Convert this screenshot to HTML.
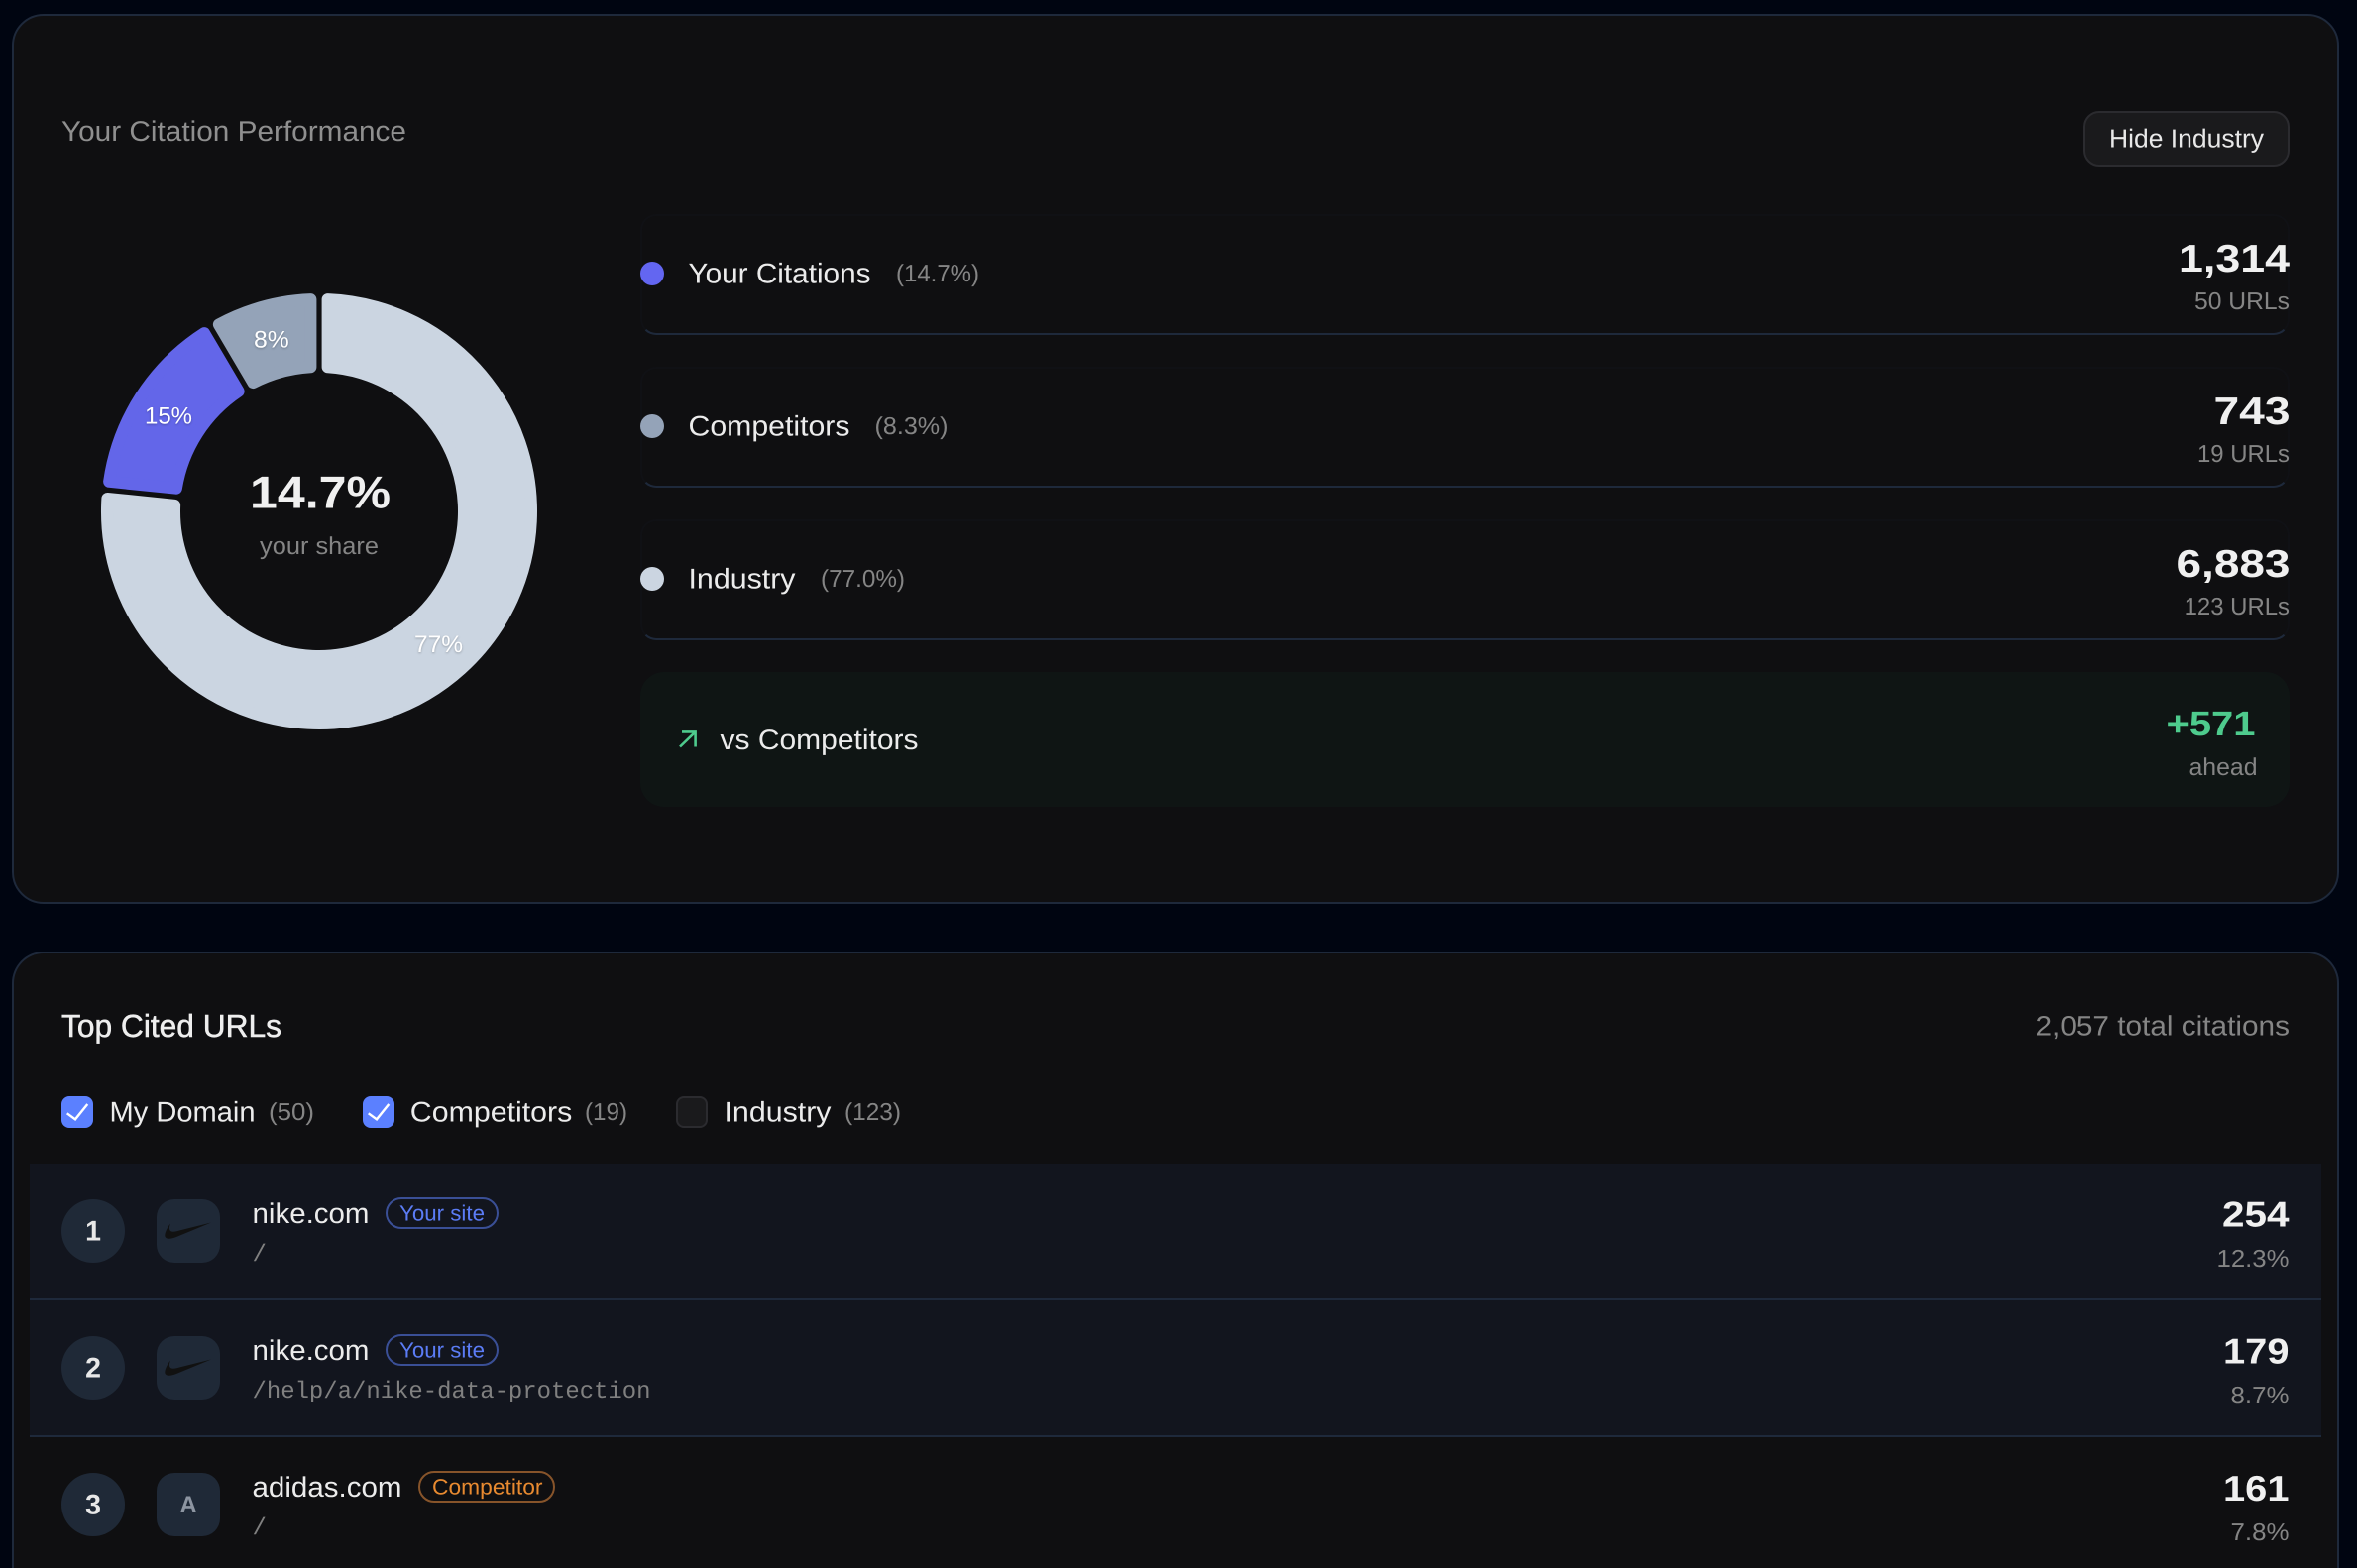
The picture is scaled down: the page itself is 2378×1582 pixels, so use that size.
<!DOCTYPE html>
<html lang="en">
<head>
<meta charset="utf-8">
<title>Citation Performance</title>
<style>
html,body{margin:0;padding:0;background:#000511;width:2378px;height:1582px;overflow:hidden}
#page{position:relative;width:2378px;height:1582px;overflow:hidden;background:#000511;font-family:"Liberation Sans",sans-serif}
.abs{position:absolute;box-sizing:border-box}
.card{background:#0f0f11;border:2px solid #1e293b;border-radius:32px}
.leg{left:646px;width:1664px;height:122px;border:2px solid #101115;border-bottom-color:#1e293b;border-radius:16px}
.fav{left:158px;width:64px;height:64px;border-radius:18px;background:#1f2937}
.rank{left:62px;width:64px;height:64px;border-radius:50%;background:#1f2937}
.badge{height:32px;border-radius:16px;border:2px solid #3a4f96}
svg{position:absolute;left:0;top:0}
svg text{font-family:"Liberation Sans",sans-serif;text-rendering:geometricPrecision}
svg .mono{font-family:"Liberation Mono",monospace}
.t{font-size:28.5px;fill:#ececec}
.s{font-size:24.5px;fill:#858585}
.b{font-weight:700;fill:#f0f0f0}
.pct{font-size:24px;fill:#fff}
</style>
</head>
<body>
<div id="page">
<div class="abs card" style="left:12px;top:14px;width:2348px;height:898px"></div>
<div class="abs" style="left:2102px;top:112px;width:208px;height:56px;background:#1a1a1c;border:2px solid #2b2b2f;border-radius:16px"></div>
<div class="abs leg" style="top:216px"></div>
<div class="abs leg" style="top:370px"></div>
<div class="abs leg" style="top:524px"></div>
<div class="abs" style="left:646px;top:678px;width:1664px;height:136px;background:#0f1514;border-radius:24px"></div>

<div class="abs card" style="left:12px;top:960px;width:2348px;height:622px;border-bottom:0;border-radius:32px 32px 0 0"></div>
<div class="abs" style="left:682px;top:1106px;width:32px;height:32px;background:#1a1a1c;border:2px solid #2b2b2f;border-radius:8px"></div>
<div class="abs" style="left:62px;top:1106px;width:32px;height:32px;background:#5b80ff;border-radius:8px"></div>
<div class="abs" style="left:366px;top:1106px;width:32px;height:32px;background:#5b80ff;border-radius:8px"></div>

<div class="abs" style="left:30px;top:1174px;width:2312px;height:138px;background:#12151e;border-bottom:2px solid #1e293b"></div>
<div class="abs" style="left:30px;top:1312px;width:2312px;height:138px;background:#12151e;border-bottom:2px solid #1e293b"></div>

<div class="abs rank" style="top:1210px"></div>
<div class="abs rank" style="top:1348px"></div>
<div class="abs rank" style="top:1486px"></div>
<div class="abs fav" style="top:1210px"></div>
<div class="abs fav" style="top:1348px"></div>
<div class="abs fav" style="top:1486px"></div>
<div class="abs badge" style="left:389px;top:1208px;width:114px"></div>
<div class="abs badge" style="left:389px;top:1346px;width:114px"></div>
<div class="abs badge" style="left:422px;top:1484px;width:138px;border-color:#87542a"></div>

<svg width="2378" height="1582" viewBox="0 0 2378 1582" xmlns="http://www.w3.org/2000/svg">
  <!-- donut -->
  <g stroke-width="12" stroke-linejoin="round">
    <path fill="#cbd5e1" stroke="#cbd5e1" d="M330.6 302.17A214 214 0 1 1 108.39 502.95L176.13 509.83A146 146 0 1 0 330.6 370.25Z"/>
    <path fill="#6366e9" stroke="#6366e9" d="M110.13 485.83A214 214 0 0 1 206.06 336.12L240.62 394.78A146 146 0 0 0 177.87 492.71Z"/>
    <path fill="#94a3b8" stroke="#94a3b8" d="M220.88 327.4A214 214 0 0 1 313.4 302.17L313.4 370.25A146 146 0 0 0 255.44 386.05Z"/>
  </g>
  <g style="filter:drop-shadow(0 1px 1px rgba(0,0,0,.25))">
    <text class="pct" x="256" y="350.7" textLength="35.7" lengthAdjust="spacingAndGlyphs">8%</text>
    <text class="pct" x="146" y="427.3" textLength="48" lengthAdjust="spacingAndGlyphs">15%</text>
    <text class="pct" x="418" y="658" textLength="49" lengthAdjust="spacingAndGlyphs">77%</text>
  </g>
  <text class="b" x="252" y="512.7" font-size="46" textLength="142" lengthAdjust="spacingAndGlyphs">14.7%</text>
  <text class="s" x="262" y="559" textLength="120" lengthAdjust="spacingAndGlyphs">your share</text>

  <!-- top card text -->
  <text class="t" x="62" y="142" textLength="348" lengthAdjust="spacingAndGlyphs" style="fill:#8f8f8f">Your Citation Performance</text>
  <text x="2128" y="148.3" font-size="26" fill="#e8e8e8" textLength="156" lengthAdjust="spacingAndGlyphs">Hide Industry</text>

  <circle cx="658" cy="276" r="12" fill="#6366f1"/>
  <circle cx="658" cy="430" r="12" fill="#94a3b8"/>
  <circle cx="658" cy="584" r="12" fill="#cbd5e1"/>

  <text class="t" x="694.5" y="285.7" textLength="184" lengthAdjust="spacingAndGlyphs">Your Citations</text>
  <text class="s" x="904" y="284" textLength="84" lengthAdjust="spacingAndGlyphs">(14.7%)</text>
  <text class="t" x="694.5" y="439.5" textLength="163" lengthAdjust="spacingAndGlyphs">Competitors</text>
  <text class="s" x="882.5" y="438" textLength="74" lengthAdjust="spacingAndGlyphs">(8.3%)</text>
  <text class="t" x="694.5" y="593.7" textLength="108" lengthAdjust="spacingAndGlyphs">Industry</text>
  <text class="s" x="828" y="592" textLength="85" lengthAdjust="spacingAndGlyphs">(77.0%)</text>

  <text class="b" x="2198" y="274" font-size="39" textLength="112" lengthAdjust="spacingAndGlyphs">1,314</text>
  <text class="s" x="2214" y="312" textLength="96" lengthAdjust="spacingAndGlyphs">50 URLs</text>
  <text class="b" x="2233.5" y="428" font-size="39" textLength="77" lengthAdjust="spacingAndGlyphs">743</text>
  <text class="s" x="2217" y="466" textLength="93" lengthAdjust="spacingAndGlyphs">19 URLs</text>
  <text class="b" x="2195.5" y="582" font-size="39" textLength="115" lengthAdjust="spacingAndGlyphs">6,883</text>
  <text class="s" x="2203.6" y="620" textLength="106.4" lengthAdjust="spacingAndGlyphs">123 URLs</text>

  <path d="M686 753.5L701.6 738.4M688 738.4H701.6V753.5" fill="none" stroke="#4ecb8d" stroke-width="2.6"/>
  <text class="t" x="726.5" y="756" textLength="200" lengthAdjust="spacingAndGlyphs">vs Competitors</text>
  <text class="b" x="2185.5" y="742" font-size="35" textLength="90" lengthAdjust="spacingAndGlyphs" style="fill:#4ecb8d">+571</text>
  <text class="s" x="2208.5" y="782" textLength="69" lengthAdjust="spacingAndGlyphs">ahead</text>

  <!-- second card text -->
  <text x="62" y="1046" font-size="32" fill="#eeeeee" stroke="#eeeeee" stroke-width=".5" textLength="222" lengthAdjust="spacingAndGlyphs">Top Cited URLs</text>
  <text x="2053.5" y="1044.5" font-size="28" fill="#858585" textLength="256.5" lengthAdjust="spacingAndGlyphs">2,057 total citations</text>

  <path d="M67.7 1123.3L76 1129.3L88.3 1114" fill="none" stroke="#fff" stroke-width="2.4"/>
  <path d="M371.7 1123.3L380 1129.3L392.3 1114" fill="none" stroke="#fff" stroke-width="2.4"/>
  <text class="t" x="110.5" y="1131.7" textLength="147" lengthAdjust="spacingAndGlyphs">My Domain</text>
  <text class="s" x="271" y="1130" textLength="46" lengthAdjust="spacingAndGlyphs">(50)</text>
  <text class="t" x="413.8" y="1131.7" textLength="163.5" lengthAdjust="spacingAndGlyphs">Competitors</text>
  <text class="s" x="590" y="1130" textLength="43" lengthAdjust="spacingAndGlyphs">(19)</text>
  <text class="t" x="730.5" y="1131.7" textLength="108" lengthAdjust="spacingAndGlyphs">Industry</text>
  <text class="s" x="852" y="1130" textLength="57" lengthAdjust="spacingAndGlyphs">(123)</text>

  <!-- rows -->
  <text class="b" x="94" y="1251.7" font-size="28.5" text-anchor="middle" style="fill:#e8e8e8">1</text>
  <text class="b" x="94" y="1389.5" font-size="28.5" text-anchor="middle" style="fill:#e8e8e8">2</text>
  <text class="b" x="94" y="1527.5" font-size="28.5" text-anchor="middle" style="fill:#e8e8e8">3</text>

  <path transform="translate(158 1210)" fill="#111" d="M55 23.5L20 38C15 40 11 40.5 9 38.5C7 36 10 29.5 14 24.5C12.5 28.5 12.5 31.5 15 32.5C17 33 20 32.5 23 31.5Z"/>
  <path transform="translate(158 1348)" fill="#111" d="M55 23.5L20 38C15 40 11 40.5 9 38.5C7 36 10 29.5 14 24.5C12.5 28.5 12.5 31.5 15 32.5C17 33 20 32.5 23 31.5Z"/>
  <text x="190" y="1526" font-size="24" font-weight="700" fill="#8d95a1" text-anchor="middle">A</text>

  <text class="t" x="254.5" y="1234" textLength="118" lengthAdjust="spacingAndGlyphs">nike.com</text>
  <text x="403" y="1231.7" font-size="22" fill="#5b7cf5" textLength="86" lengthAdjust="spacingAndGlyphs">Your site</text>
  <text class="mono" x="254.5" y="1272" font-size="24" fill="#808080">/</text>

  <text class="t" x="254.5" y="1372" textLength="118" lengthAdjust="spacingAndGlyphs">nike.com</text>
  <text x="403" y="1369.7" font-size="22" fill="#5b7cf5" textLength="86" lengthAdjust="spacingAndGlyphs">Your site</text>
  <text class="mono" x="254.5" y="1410" font-size="24" fill="#808080" textLength="402" lengthAdjust="spacingAndGlyphs">/help/a/nike-data-protection</text>

  <text class="t" x="254.5" y="1510" textLength="151" lengthAdjust="spacingAndGlyphs">adidas.com</text>
  <text x="436" y="1507.7" font-size="22" fill="#e88a30" textLength="111.5" lengthAdjust="spacingAndGlyphs">Competitor</text>
  <text class="mono" x="254.5" y="1548" font-size="24" fill="#808080">/</text>

  <text class="b" x="2242" y="1237.6" font-size="36" textLength="67.5" lengthAdjust="spacingAndGlyphs">254</text>
  <text class="s" x="2236.5" y="1278" textLength="73" lengthAdjust="spacingAndGlyphs">12.3%</text>
  <text class="b" x="2243" y="1375.6" font-size="36" textLength="66.5" lengthAdjust="spacingAndGlyphs">179</text>
  <text class="s" x="2250.5" y="1416" textLength="59" lengthAdjust="spacingAndGlyphs">8.7%</text>
  <text class="b" x="2243" y="1514" font-size="36" textLength="66.5" lengthAdjust="spacingAndGlyphs">161</text>
  <text class="s" x="2250.5" y="1554" textLength="59" lengthAdjust="spacingAndGlyphs">7.8%</text>
</svg>
</div>
</body>
</html>
